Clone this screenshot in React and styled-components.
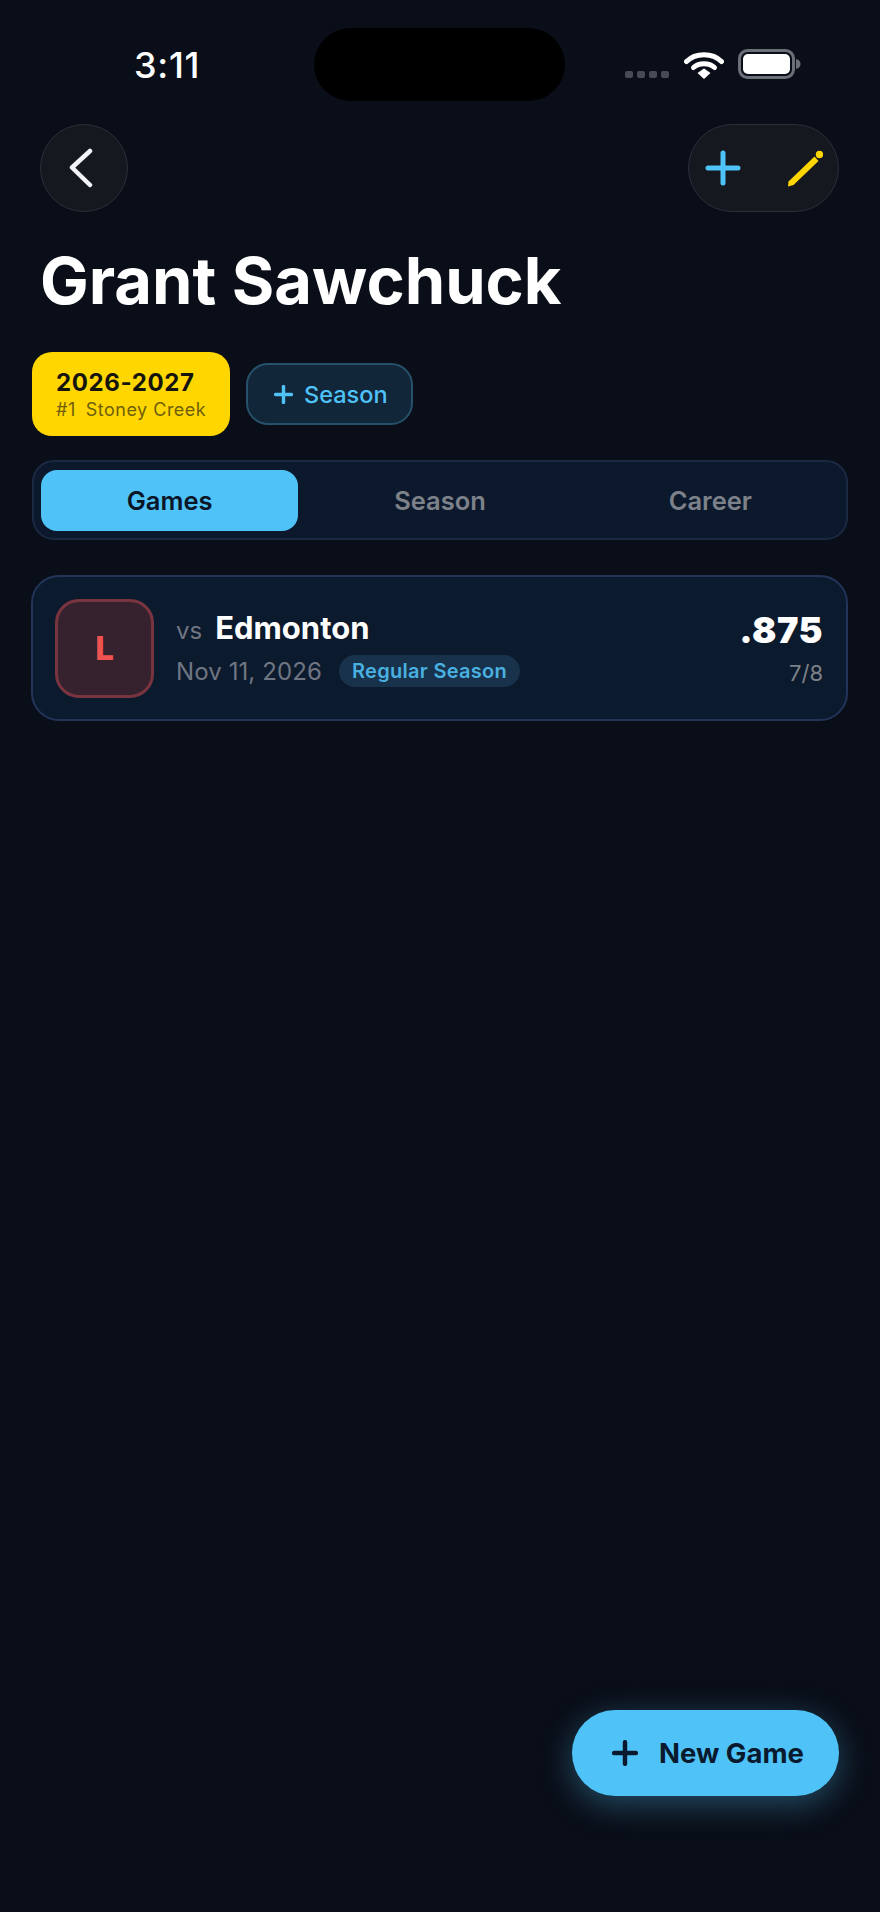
import React from 'react'
import styled, { createGlobalStyle } from 'styled-components'

const GlobalStyle = createGlobalStyle`
  html, body {
    margin: 0;
    padding: 0;
    background: #0a0e18;
  }
  * {
    box-sizing: border-box;
  }
`

const Screen = styled.div`
  position: relative;
  width: 880px;
  height: 1912px;
  overflow: hidden;
  background: #0a0e18;
  font-family: 'Inter', 'Liberation Sans', sans-serif;
  color: #fff;
`

const StatusBar = styled.div`
  display: flex;
  align-items: flex-start;
  height: 124px;
  padding-top: 28px;
`

const Time = styled.div`
  width: 314px;
  padding: 15px 0 0 134px;
  font-size: 36px;
  line-height: 44px;
  font-weight: 500;
  letter-spacing: 0.7px;
`

const Island = styled.div`
  width: 251px;
  height: 73px;
  border-radius: 37px;
  background: #000;
`

const StatusIcons = styled.div`
  display: flex;
  align-items: flex-end;
  margin: 21px 0 0 60px;
`

const SignalDots = styled.div`
  display: flex;
  gap: 4.5px;
  margin: 0 15px 1px 0;
`

const Dot = styled.span`
  width: 7.5px;
  height: 7.5px;
  border-radius: 2px;
  background: #464b56;
`

const Wifi = styled.svg`
  display: block;
  margin-right: 14px;
`

const HeaderRow = styled.div`
  display: flex;
  justify-content: space-between;
  padding: 0 41px 0 40px;
`

const BackButton = styled.button`
  display: flex;
  align-items: center;
  justify-content: center;
  width: 88px;
  height: 88px;
  padding: 0 6px 0 0;
  border-radius: 50%;
  border: 1.5px solid #2a2e39;
  background: #14181f;
`

const ActionPill = styled.div`
  display: flex;
  align-items: center;
  justify-content: space-between;
  width: 151px;
  height: 88px;
  padding: 0 15px 0 16px;
  border-radius: 44px;
  border: 1.5px solid #2a2e3c;
  background: #15181f;
`

const Title = styled.h1`
  margin: 30px 0 0 40px;
  font-size: 65px;
  line-height: 78px;
  font-weight: 700;
  color: #fff;
`

const SeasonRow = styled.div`
  display: flex;
  align-items: center;
  gap: 16px;
  margin: 32px 32px 0;
`

const SeasonChip = styled.div`
  display: flex;
  flex-direction: column;
  gap: 2px;
  width: 198px;
  height: 84px;
  padding: 16px 0 0 24px;
  border-radius: 20px;
  background: #ffd600;
`

const ChipYear = styled.div`
  font-size: 24px;
  line-height: 29px;
  font-weight: 700;
  letter-spacing: 0.6px;
  color: #14140c;
`

const ChipTeam = styled.div`
  display: flex;
  gap: 10px;
  font-size: 18px;
  line-height: 22px;
  font-weight: 400;
  letter-spacing: 0.5px;
  color: #6f5f0a;
`

const AddSeason = styled.button`
  display: flex;
  align-items: center;
  gap: 11px;
  width: 167px;
  height: 62px;
  padding: 0 0 0 26px;
  border-radius: 22px;
  border: 2px solid #27506a;
  background: #12263a;
  font-family: inherit;
  font-size: 23.5px;
  font-weight: 500;
  color: #4fc3f7;
`

const Tabs = styled.div`
  display: flex;
  gap: 13px;
  height: 80px;
  margin: 24px 32px 0;
  padding: 7.5px 7px;
  border-radius: 22px;
  border: 2px solid #1b2a42;
  background: #0c192d;
`

const Tab = styled.div`
  flex: 1;
  display: flex;
  align-items: center;
  justify-content: center;
  border-radius: 16px;
  font-size: 25.5px;
  font-weight: 600;
  background: ${(props) => (props.$active ? '#4fc3f7' : 'transparent')};
  color: ${(props) => (props.$active ? '#0a1628' : '#7d8189')};
`

const GameCard = styled.div`
  display: flex;
  align-items: center;
  height: 146px;
  margin: 35px 32px 0 31px;
  padding: 0 23px 0 22px;
  border-radius: 28px;
  border: 2.5px solid #22345a;
  background: #0c1a2d;
`

const ResultBox = styled.div`
  display: flex;
  align-items: center;
  justify-content: center;
  flex-shrink: 0;
  width: 99px;
  height: 99px;
  border-radius: 24px;
  border: 3px solid #7a3440;
  background: #35222e;
  font-size: 33px;
  font-weight: 800;
  color: #ef5350;
`

const GameInfo = styled.div`
  flex: 1;
  display: flex;
  flex-direction: column;
  gap: 8px;
  margin-left: 22px;
`

const Matchup = styled.div`
  display: flex;
  align-items: baseline;
  gap: 13px;
`

const Versus = styled.span`
  font-size: 24px;
  color: #6f7683;
`

const Opponent = styled.span`
  font-size: 31px;
  line-height: 38px;
  font-weight: 700;
  color: #fff;
`

const MetaRow = styled.div`
  display: flex;
  align-items: center;
  gap: 17px;
`

const GameDate = styled.span`
  font-size: 24px;
  letter-spacing: 0.1px;
  color: #6f7683;
`

const TypeBadge = styled.span`
  display: flex;
  align-items: center;
  height: 32px;
  padding: 0 13px;
  border-radius: 16px;
  background: #17324a;
  font-size: 20px;
  font-weight: 600;
  letter-spacing: 0.3px;
  color: #4ab0e0;
`

const StatBlock = styled.div`
  display: flex;
  flex-direction: column;
  align-items: flex-end;
  gap: 8px;
`

const Average = styled.div`
  font-size: 36px;
  line-height: 42px;
  font-weight: 900;
  letter-spacing: 0.5px;
  color: #fff;
`

const Fraction = styled.div`
  font-size: 22px;
  line-height: 28px;
  color: #7d8189;
`

const NewGameButton = styled.button`
  position: absolute;
  left: 572px;
  top: 1710px;
  display: flex;
  align-items: center;
  gap: 21px;
  width: 267px;
  height: 86px;
  padding: 0 0 0 40px;
  border: none;
  border-radius: 43px;
  background: #4fc3f7;
  box-shadow: 0 8px 32px rgba(79, 195, 247, 0.35);
  font-family: inherit;
  font-size: 27.5px;
  font-weight: 700;
  color: #0a1a2e;
`

const PlusIcon = ({ size, stroke, color }) => (
  <svg width={size} height={size} viewBox="0 0 36 36" fill="none">
    <path d="M18 3V33M3 18H33" stroke={color} strokeWidth={stroke} strokeLinecap="round" />
  </svg>
)

const App = () => {
  return (
    <Screen>
      <GlobalStyle />
      <StatusBar>
        <Time>3:11</Time>
        <Island />
        <StatusIcons>
          <SignalDots>
            <Dot />
            <Dot />
            <Dot />
            <Dot />
          </SignalDots>
          <Wifi width="40" height="29" viewBox="0 0 40 29" fill="none">
            <path d="M2.5 11.5C11.5 2.5 28.5 2.5 37.5 11.5" stroke="#fff" strokeWidth="5" strokeLinecap="round" />
            <path d="M9.5 17.5C15 12.5 25 12.5 30.5 17.5" stroke="#fff" strokeWidth="5" strokeLinecap="round" />
            <path d="M13.5 23L20 18.5L26.5 23L20 29Z" fill="#fff" />
          </Wifi>
          <svg width="63" height="30" viewBox="0 0 63 30" fill="none">
            <rect x="1.5" y="1.5" width="54" height="27" rx="8" stroke="#6b6f78" strokeWidth="3" />
            <rect x="5" y="5" width="47" height="20" rx="5" fill="#fff" />
            <path d="M58 10C61 10.5 62.5 12.5 62.5 15C62.5 17.5 61 19.5 58 20Z" fill="#6b6f78" />
          </svg>
        </StatusIcons>
      </StatusBar>

      <HeaderRow>
        <BackButton>
          <svg width="26" height="40" viewBox="0 0 26 40" fill="none">
            <path d="M22 3L4 19.5L22 37" stroke="#f2f4f8" strokeWidth="4.5" strokeLinecap="round" strokeLinejoin="round" />
          </svg>
        </BackButton>
        <ActionPill>
          <PlusIcon size={36} stroke={5} color="#4fc3f7" />
          <svg width="35" height="37" viewBox="0 0 35 37" fill="none">
            <path d="M0 36.5L0.5 31.5L26.5 6.5L30.5 11L5.5 35Z" fill="#ffd600" />
            <circle cx="31.5" cy="4.5" r="3.7" fill="#ffd600" />
          </svg>
        </ActionPill>
      </HeaderRow>

      <Title>Grant Sawchuck</Title>

      <SeasonRow>
        <SeasonChip>
          <ChipYear>2026-2027</ChipYear>
          <ChipTeam>
            <span>#1</span>
            <span>Stoney Creek</span>
          </ChipTeam>
        </SeasonChip>
        <AddSeason>
          <PlusIcon size={19} stroke={6.5} color="#4fc3f7" />
          Season
        </AddSeason>
      </SeasonRow>

      <Tabs>
        <Tab $active>Games</Tab>
        <Tab>Season</Tab>
        <Tab>Career</Tab>
      </Tabs>

      <GameCard>
        <ResultBox>L</ResultBox>
        <GameInfo>
          <Matchup>
            <Versus>vs</Versus>
            <Opponent>Edmonton</Opponent>
          </Matchup>
          <MetaRow>
            <GameDate>Nov 11, 2026</GameDate>
            <TypeBadge>Regular Season</TypeBadge>
          </MetaRow>
        </GameInfo>
        <StatBlock>
          <Average>.875</Average>
          <Fraction>7/8</Fraction>
        </StatBlock>
      </GameCard>

      <NewGameButton>
        <PlusIcon size={26} stroke={6.2} color="#0a1a2e" />
        New Game
      </NewGameButton>
    </Screen>
  )
}

export default App
